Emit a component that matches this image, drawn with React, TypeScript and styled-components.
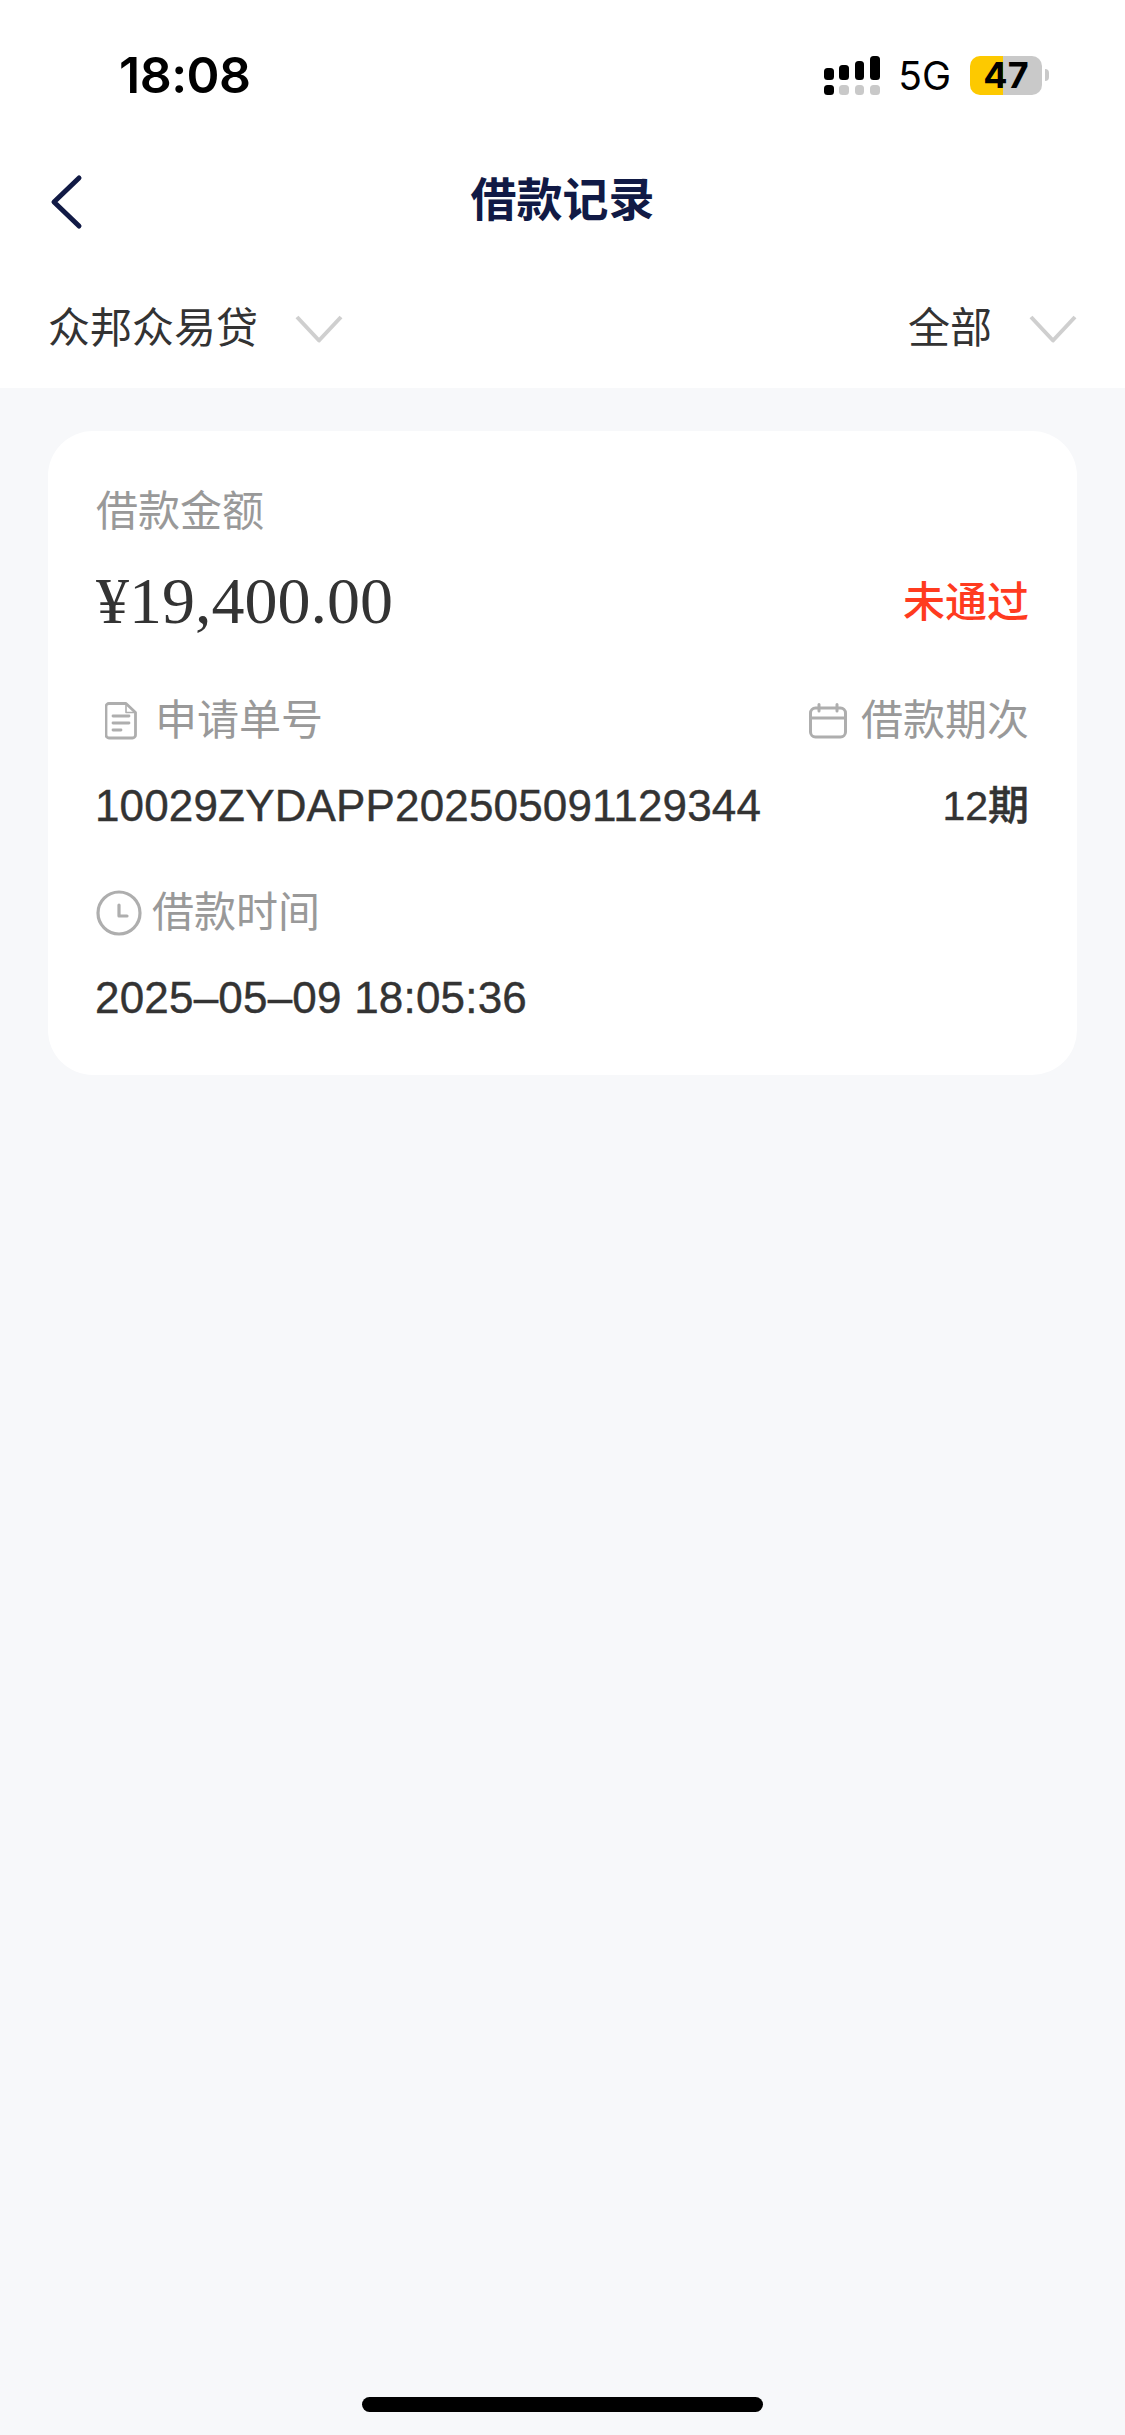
import React from "react";
import styled, { createGlobalStyle } from "styled-components";

const Global = createGlobalStyle`
  html, body { margin: 0; padding: 0; background: #f7f8fa; }
  * { box-sizing: border-box; }
`;
const CJK = `"Liberation Sans", "Noto Sans CJK SC", sans-serif`;

const Page = styled.div`
  width: 1125px; height: 2435px; background: #f7f8fa; font-family: ${CJK};
  display: flex; flex-direction: column;
`;
const Header = styled.header`
  background: #fff; height: 388px; display: flex; flex-direction: column;
`;
const StatusBar = styled.div`
  height: 150px; display: flex; align-items: center; justify-content: space-between;
  padding: 0 76px 0 119px;
`;
const Time = styled.div`
  font-family: Inter, "Liberation Sans", sans-serif; font-size: 50px; font-weight: 600; color: #000; line-height: 1; letter-spacing: -0.5px;
`;
const StatusRight = styled.div`display: flex; align-items: center;`;
const Network = styled.span`
  font-family: Inter, "Liberation Sans", sans-serif; font-size: 39px; font-weight: 400; color: #000; margin: 0 19px 0 18px; line-height: 1;
`;
const Battery = styled.div`
  width: 72px; height: 39px; border-radius: 10px;
  background: linear-gradient(90deg, #fdc900 0 33px, #c9c9c9 33px 100%);
  display: flex; align-items: center; justify-content: center;
  font-family: Inter, "Liberation Sans", sans-serif; font-size: 36px; font-weight: 700; color: #000; line-height: 1;
`;
const BatteryCap = styled.div`
  width: 4px; height: 12px; background: #c9c9c9; border-radius: 0 4px 4px 0; margin-left: 3px;
`;
const Nav = styled.nav`
  height: 100px; position: relative; display: flex; align-items: center; justify-content: center;
`;
const BackButton = styled.div`
  position: absolute; left: 48px; top: 24px; width: 36px; height: 56px; display: flex;
`;
const Title = styled.h1`
  margin: 0; font-size: 46px; font-weight: 700; color: #111a45; line-height: 1;
`;
const Filters = styled.div`
  flex: 1; display: flex; align-items: center; justify-content: space-between; padding: 20px 48px 0;
`;
const Filter = styled.div`display: flex; align-items: center; gap: 37px;`;
const FilterLabel = styled.span`font-size: 42px; color: #333; line-height: 1;`;

const Card = styled.section`
  margin: 43px 48px 0; height: 644px; background: #fff; border-radius: 45px; padding: 57px 48px 0;
  display: flex; flex-direction: column;
`;
const Muted = styled.div`font-size: 42px; color: #999; line-height: 48px;`;
const AmountRow = styled.div`
  display: flex; align-items: center; justify-content: space-between; margin-top: 28px; height: 74px;
`;
const Amount = styled.div`
  font-family: "Liberation Serif", serif; font-size: 66px; color: #333; line-height: 1;
`;
const Status = styled.div`font-size: 42px; font-weight: 500; color: #ff3b1f; line-height: 1; padding-top: 3px;`;
const LabelRow = styled.div<{ $top: number }>`
  display: flex; justify-content: space-between; margin-top: ${p => p.$top}px;
`;
const LabelItem = styled.div<{ $gap: number; $indent?: number }>`
  display: flex; align-items: center; gap: ${p => p.$gap}px; margin-left: ${p => p.$indent ?? 0}px;
`;
const ValueRow = styled.div`
  display: flex; justify-content: space-between; align-items: center; margin-top: 36px; height: 50px;
`;
const Value = styled.div<{ $size?: number; $spacing?: number }>`
  font-size: ${p => p.$size ?? 44}px; font-weight: 500; color: #333; line-height: 1;
  letter-spacing: ${p => p.$spacing ?? 0}px; -webkit-text-stroke: 0.4px #333; margin-left: -1px;
`;
const Spacer = styled.div`flex: 1;`;
const HomeBar = styled.div`
  width: 401px; height: 15px; border-radius: 8px; background: #000; margin: 0 auto 23px;
`;

const Chevron = () => (
  <svg width="48" height="28" viewBox="0 0 48 28" fill="none">
    <path d="M2 2 L24 25.5 L46 2" stroke="#cfcfcf" strokeWidth="4" strokeLinejoin="round" />
  </svg>
);

const Signal = () => (
  <svg width="56" height="39" viewBox="0 0 56 39">
    <rect x="0" y="12" width="10" height="12" rx="3.5" fill="#000" />
    <rect x="15" y="9" width="10" height="15" rx="3.5" fill="#000" />
    <rect x="31" y="5" width="9" height="19" rx="3.5" fill="#000" />
    <rect x="46" y="0" width="10" height="24" rx="3.5" fill="#000" />
    <rect x="0" y="29" width="10" height="10" rx="3.5" fill="#000" />
    <rect x="15" y="29" width="10" height="10" rx="3.5" fill="#c9c9c9" />
    <rect x="31" y="29" width="9" height="10" rx="3.5" fill="#c9c9c9" />
    <rect x="46" y="29" width="10" height="10" rx="3.5" fill="#c9c9c9" />
  </svg>
);

const DocIcon = () => (
  <svg width="32" height="38" viewBox="0 0 32 38" fill="none" stroke="#aeaeae" strokeWidth="2.8" strokeLinecap="round" strokeLinejoin="round">
    <path d="M4 1.5 H21 L30.5 10.5 V33 a3 3 0 0 1 -3 3 H4 a3 3 0 0 1 -3 -3 V4.5 a3 3 0 0 1 3 -3 Z" />
    <path d="M21 2 V10.5 H30" strokeWidth="1.6" />
    <path d="M8 14 H24 M8 21 H24 M8 28 H16" />
  </svg>
);

const CalendarIcon = () => (
  <svg width="38" height="36" viewBox="0 0 38 36" fill="none" stroke="#aeaeae" strokeWidth="3" strokeLinecap="round">
    <rect x="1.5" y="5" width="35" height="29" rx="5" />
    <path d="M1.5 15 H36.5 M10 1.5 V8 M28 1.5 V8" />
  </svg>
);

const ClockIcon = () => (
  <svg width="46" height="46" viewBox="0 0 46 46" fill="none" stroke="#aeaeae" strokeWidth="3.2" strokeLinecap="round" strokeLinejoin="round">
    <circle cx="23" cy="23" r="21" />
    <path d="M23 15 V26 H31" />
  </svg>
);

export default function App() {
  return (
    <Page>
      <Global />
      <Header>
        <StatusBar>
          <Time>18:08</Time>
          <StatusRight>
            <Signal />
            <Network>5G</Network>
            <Battery>47</Battery>
            <BatteryCap />
          </StatusRight>
        </StatusBar>
        <Nav>
          <BackButton>
            <svg width="36" height="56" viewBox="0 0 36 56" fill="none">
              <path d="M31 4 L6 28 L31 52" stroke="#111a45" strokeWidth="5" strokeLinecap="round" strokeLinejoin="round" />
            </svg>
          </BackButton>
          <Title>借款记录</Title>
        </Nav>
        <Filters>
          <Filter><FilterLabel>众邦众易贷</FilterLabel><Chevron /></Filter>
          <Filter><FilterLabel>全部</FilterLabel><Chevron /></Filter>
        </Filters>
      </Header>
      <Card>
        <Muted>借款金额</Muted>
        <AmountRow>
          <Amount>¥19,400.00</Amount>
          <Status>未通过</Status>
        </AmountRow>
        <LabelRow $top={59}>
          <LabelItem $gap={18} $indent={9}><DocIcon /><Muted>申请单号</Muted></LabelItem>
          <LabelItem $gap={14}><CalendarIcon /><Muted>借款期次</Muted></LabelItem>
        </LabelRow>
        <ValueRow>
          <Value $spacing={0.15}>10029ZYDAPP202505091129344</Value>
          <Value $size={41}>12期</Value>
        </ValueRow>
        <LabelRow $top={58}>
          <LabelItem $gap={10}><ClockIcon /><Muted>借款时间</Muted></LabelItem>
        </LabelRow>
        <ValueRow>
          <Value $spacing={0.2}>2025–05–09 18:05:36</Value>
        </ValueRow>
      </Card>
      <Spacer />
      <HomeBar />
    </Page>
  );
}
